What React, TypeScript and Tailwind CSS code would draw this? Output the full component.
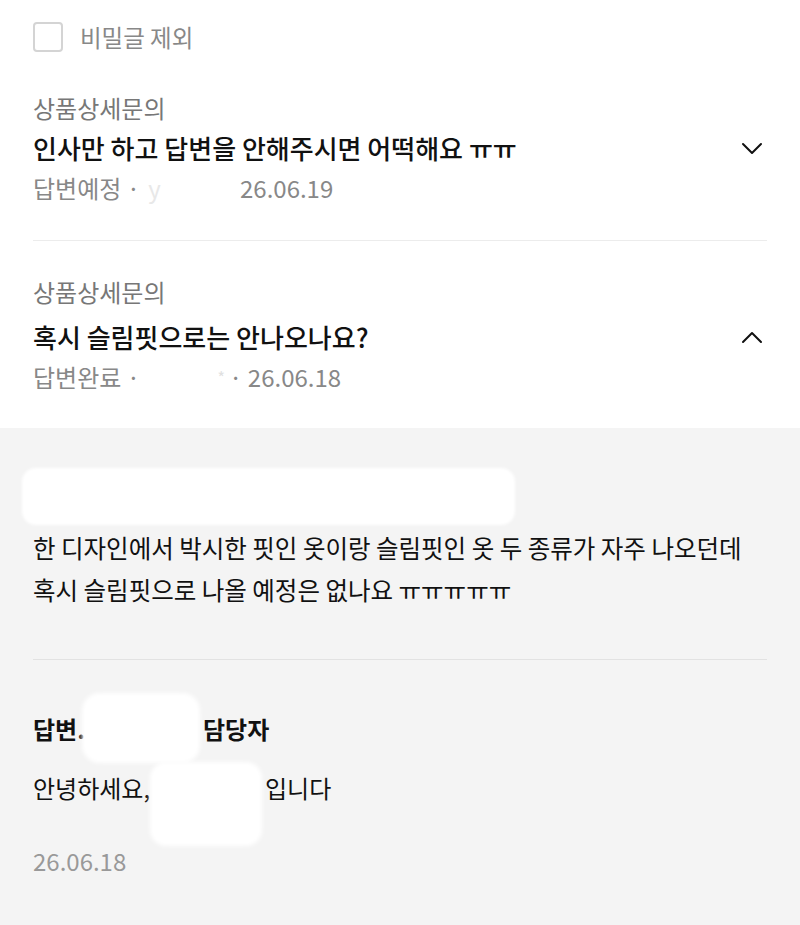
import React from "react";

const font = { fontFamily: '"Noto Sans CJK KR", "Noto Sans", sans-serif' };

function Chevron({ up }: { up?: boolean }) {
  return (
    <svg width="24" height="24" viewBox="0 0 24 24" fill="none" className="shrink-0 mr-[3px]">
      {up ? (
        <polyline points="3,17 12,8 21,17" stroke="#111" strokeWidth="2" strokeLinecap="round" strokeLinejoin="round" />
      ) : (
        <polyline points="3,8 12,17 21,8" stroke="#111" strokeWidth="2" strokeLinecap="round" strokeLinejoin="round" />
      )}
    </svg>
  );
}

export default function App() {
  return (
    <div className="w-[800px] h-[925px] bg-white overflow-hidden flex flex-col" style={font}>
      <div className="px-[33px]">
        {/* 비밀글 제외 */}
        <div className="flex items-center gap-[17px] pt-[22px]">
          <div className="w-[30px] h-[30px] rounded-[4px] border-2 border-[#d4d4d4] bg-white" />
          <span className="text-[23.5px] leading-[30px] text-[#888]">비밀글 제외</span>
        </div>

        {/* item 1 */}
        <div className="pt-[36px] pb-[32px] border-b border-[#ececec]">
          <div className="text-[24px] leading-[40px] text-[#777]">상품상세문의</div>
          <div className="flex items-center justify-between">
            <div className="text-[26px] leading-[40px] text-[#111] font-medium">
              인사만 하고 답변을 안해주시면 어떡해요 ㅠㅠ
            </div>
            <Chevron />
          </div>
          <div className="text-[24px] leading-[40px] text-[#888] flex">
            <span className="w-[207px] shrink-0">
              답변예정 ·<span className="text-[#e8e8e8] ml-[8px]">y</span>
            </span>
            <span>26.06.19</span>
          </div>
        </div>

        {/* item 2 */}
        <div className="pt-[31px] pb-[31px]">
          <div className="text-[24px] leading-[40px] text-[#777]">상품상세문의</div>
          <div className="flex items-center justify-between mt-[5px]">
            <div className="text-[26px] leading-[40px] text-[#111] font-medium">
              혹시 슬림핏으로는 안나오나요?
            </div>
            <Chevron up />
          </div>
          <div className="text-[24px] leading-[40px] text-[#888] flex">
            <span className="w-[192px] shrink-0 flex justify-between">
              <span>답변완료 ·</span>
              <span className="text-[#e0e0e0] text-[16px]">*</span>
            </span>
            <span className="ml-[4px]">· 26.06.18</span>
          </div>
        </div>
      </div>

      {/* expanded answer */}
      <div className="bg-[#f4f4f4] px-[33px] pt-[40px] flex-1">
        <div className="-ml-[11px] w-[493px] h-[57px] bg-white rounded-[14px] blur-[1.5px]" />
        <div className="text-[24.5px] leading-[42px] text-[#111] mt-[2px]">
          <div>한 디자인에서 박시한 핏인 옷이랑 슬림핏인 옷 두 종류가 자주 나오던데</div>
          <div>혹시 슬림핏으로 나올 예정은 없나요 ㅠㅠㅠㅠㅠ</div>
        </div>
        <div className="border-b border-[#e2e2e2] mt-[48px]" />

        <div className="relative pt-[48px]">
          <div className="text-[24px] leading-[42px] text-[#111] font-bold flex">
            <span className="w-[170px] shrink-0">답변.</span>
            <span>담당자</span>
          </div>
          <div className="text-[24px] leading-[42px] text-[#111] mt-[17px] flex">
            <span className="w-[232px] shrink-0">안녕하세요,</span>
            <span>입니다</span>
          </div>
          <div className="text-[24px] leading-[42px] text-[#999] mt-[31px]">26.06.18</div>

          <div className="absolute left-[49px] top-[33px] w-[118px] h-[70px] bg-white rounded-[18px] blur-[2px]" />
          <div className="absolute left-[117px] top-[102px] w-[112px] h-[84px] bg-white rounded-[16px] blur-[2px]" />
        </div>
      </div>
    </div>
  );
}
